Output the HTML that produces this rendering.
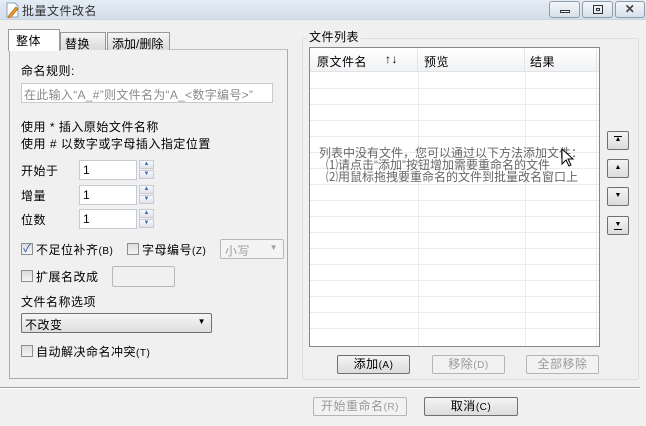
<!DOCTYPE html>
<html><head><meta charset="utf-8"><style>
*{box-sizing:border-box;margin:0;padding:0}
body{width:646px;height:426px;overflow:hidden;background:#f0f0f0;font:12px "Liberation Sans","Noto Sans CJK SC","WenQuanYi Zen Hei",sans-serif;color:#000;position:relative;letter-spacing:0.5px}
.a{position:absolute;white-space:nowrap}
.title{left:0;top:0;width:646px;height:20px;background:linear-gradient(#e4ecf5,#d3deea);border-bottom:1px solid #c9d4df}
.wb{top:1px;height:17px;border:1px solid #8e9cab;border-radius:3px;background:linear-gradient(#f4f7fa,#d7e0ea)}
.inp{background:#fff;border:1px solid #c6cbd1}
.spin{width:15px;height:9px;border:1px solid #c8ccd2;background:linear-gradient(#f6f8fb,#dfe5ec);font-size:6px;color:#3d6bb5;text-align:center;line-height:7px;letter-spacing:0}
.cb{width:12px;height:12px;border:1px solid #8a8f95;background:linear-gradient(#dcdcdc,#f5f5f5)}
.btn{height:19px;border:1px solid #707070;border-radius:2px;background:linear-gradient(#f4f4f4,#dcdcdc);text-align:center;line-height:17px}
.dis{border-color:#b5b5b5;color:#9a9a9a;background:#f2f2f2}
.sb{left:607px;width:22px;height:19px;border:1px solid #707070;border-radius:2px;background:linear-gradient(#f4f4f4,#dcdcdc);font-size:7px;text-align:center;line-height:16px;letter-spacing:0}
.hl{left:310px;width:289px;height:1px;background:#ececec}
.vl{top:72px;width:1px;height:274px;background:#ececec}
.msg{color:#666;left:319px}
</style></head><body>
<div class="a title"></div>
<svg class="a" style="left:4px;top:2px" width="16" height="16"><path d="M3 1h8l3 3v11H3z" fill="#fff" stroke="#8aa0b8"/><path d="M5 13l7-8 2 2-7 8-3 1z" fill="#e8a030" stroke="#a06010" stroke-width=".6"/></svg>
<div class="a" style="left:22px;top:2px;color:#333">批量文件改名</div>
<div class="a wb" style="left:549px;width:31px"><div class="a" style="left:10px;top:8px;width:10px;height:3px;border:1px solid #333;background:#fff"></div></div>
<div class="a wb" style="left:582px;width:31px"><div class="a" style="left:10px;top:3px;width:10px;height:9px;border:1px solid #333"></div><div class="a" style="left:13px;top:6px;width:4px;height:3px;border:1px solid #333"></div></div>
<div class="a wb" style="left:615px;width:30px;text-align:center;font-weight:bold;font-size:12px;line-height:14px;color:#444">✕</div>

<div class="a" style="left:9px;top:49px;width:279px;height:330px;border:1px solid #aaa;border-top-color:#c0c0c0;background:#f0f0f0"></div>
<div class="a" style="left:60px;top:32px;width:46px;height:18px;border:1px solid #999;border-bottom:none;background:linear-gradient(#f5f5f5,#dadada);padding:2px 0 0 4px">替换</div>
<div class="a" style="left:107px;top:32px;width:63px;height:18px;border:1px solid #999;border-bottom:none;background:linear-gradient(#f5f5f5,#dadada);padding:2px 0 0 4px;letter-spacing:0">添加/删除</div>
<div class="a" style="left:8px;top:29px;width:52px;height:22px;border:1px solid #999;border-bottom:none;background:#fff;padding:2px 0 0 7px">整体</div>

<div class="a" style="left:21px;top:62px">命名规则:</div>
<div class="a inp" style="left:21px;top:83px;width:252px;height:20px;color:#8a8a8a;padding:2px 0 0 2px;letter-spacing:0.3px">在此输入“A_#”则文件名为“A_&lt;数字编号&gt;”</div>
<div class="a" style="left:21px;top:118px">使用 * 插入原始文件名称</div>
<div class="a" style="left:21px;top:135px">使用 # 以数字或字母插入指定位置</div>

<div class="a" style="left:21px;top:162px">开始于</div>
<div class="a inp" style="left:79px;top:160px;width:58px;height:20px;padding:2px 0 0 3px">1</div>
<div class="a spin" style="left:139px;top:160px">▲</div><div class="a spin" style="left:139px;top:170px">▼</div>
<div class="a" style="left:21px;top:187px">增量</div>
<div class="a inp" style="left:79px;top:185px;width:58px;height:20px;padding:2px 0 0 3px">1</div>
<div class="a spin" style="left:139px;top:185px">▲</div><div class="a spin" style="left:139px;top:195px">▼</div>
<div class="a" style="left:21px;top:211px">位数</div>
<div class="a inp" style="left:79px;top:209px;width:58px;height:20px;padding:2px 0 0 3px">1</div>
<div class="a spin" style="left:139px;top:209px">▲</div><div class="a spin" style="left:139px;top:219px">▼</div>

<div class="a cb" style="left:21px;top:243px;font-size:11px;line-height:10px;color:#2a4fa0;text-align:center;letter-spacing:0">✓</div>
<div class="a" style="left:36px;top:241px">不足位补齐<span style="font-size:10px">(B)</span></div>
<div class="a cb" style="left:127px;top:243px"></div>
<div class="a" style="left:142px;top:241px">字母编号<span style="font-size:10px">(Z)</span></div>
<div class="a" style="left:220px;top:239px;width:64px;height:20px;border:1px solid #b8b8b8;border-radius:2px;background:#f4f4f4;color:#a0a0a0;padding:2px 0 0 4px">小写<span style="position:absolute;right:5px;top:3px;font-size:8px">▼</span></div>
<div class="a cb" style="left:21px;top:270px"></div>
<div class="a" style="left:36px;top:268px">扩展名改成</div>
<div class="a" style="left:112px;top:266px;width:63px;height:21px;border:1px solid #b8b8b8;border-radius:2px;background:#f0f0f0"></div>
<div class="a" style="left:21px;top:293px">文件名称选项</div>
<div class="a" style="left:21px;top:313px;width:191px;height:20px;border:1px solid #707070;border-radius:2px;background:linear-gradient(#f6f6f6,#dedede);padding:2px 0 0 3px">不改变<span style="position:absolute;right:5px;top:3px;font-size:8px">▼</span></div>
<div class="a cb" style="left:21px;top:345px"></div>
<div class="a" style="left:36px;top:343px">自动解决命名冲突<span style="font-size:10px">(T)</span></div>

<div class="a" style="left:302px;top:38px;width:337px;height:342px;border:1px solid #d5dfe5;border-radius:3px"></div>
<div class="a" style="left:307px;top:28px;background:#f0f0f0;padding:0 2px">文件列表</div>
<div class="a" style="left:309px;top:47px;width:291px;height:300px;border:1px solid #828790;background:#fff"></div>
<div class="a" style="left:310px;top:48px;width:289px;height:24px;background:linear-gradient(#fff,#f1f2f4);border-bottom:1px solid #e2e3e5"></div>
<div class="a" style="left:317px;top:53px">原文件名</div>
<div class="a" style="left:385px;top:52px">↑↓</div>
<div class="a" style="left:424px;top:53px">预览</div>
<div class="a" style="left:530px;top:53px">结果</div>
<div class="a" style="left:417px;top:49px;width:1px;height:23px;background:#e2e3e5"></div>
<div class="a" style="left:524px;top:49px;width:1px;height:23px;background:#e2e3e5"></div>
<div class="a" style="left:596px;top:49px;width:1px;height:23px;background:#e2e3e5"></div>
<div class="a vl" style="left:418px"></div><div class="a vl" style="left:525px"></div><div class="a vl" style="left:596px"></div>
<div class="a hl" style="top:88px"></div><div class="a hl" style="top:104px"></div><div class="a hl" style="top:120px"></div><div class="a hl" style="top:136px"></div><div class="a hl" style="top:152px"></div><div class="a hl" style="top:168px"></div><div class="a hl" style="top:184px"></div><div class="a hl" style="top:200px"></div><div class="a hl" style="top:216px"></div><div class="a hl" style="top:232px"></div><div class="a hl" style="top:248px"></div><div class="a hl" style="top:264px"></div><div class="a hl" style="top:280px"></div><div class="a hl" style="top:296px"></div><div class="a hl" style="top:312px"></div><div class="a hl" style="top:328px"></div>
<div class="a msg" style="top:144px;letter-spacing:0">列表中没有文件，您可以通过以下方法添加文件：</div>
<div class="a msg" style="top:156px;left:326px;letter-spacing:0">⑴请点击“添加”按钮增加需要重命名的文件</div>
<div class="a msg" style="top:168px;left:326px;letter-spacing:0">⑵用鼠标拖拽要重命名的文件到批量改名窗口上</div>
<svg class="a" style="left:561px;top:148px" width="14" height="20"><path d="M1 1v15l4-4 3 6 2-1-3-6h5z" fill="#fff" stroke="#000"/></svg>

<div class="a sb" style="top:131px">▲<div style="position:absolute;left:6px;top:4px;width:8px;height:1px;background:#000"></div></div>
<div class="a sb" style="top:159px">▲</div>
<div class="a sb" style="top:187px">▼</div>
<div class="a sb" style="top:216px">▼<div style="position:absolute;left:6px;top:12px;width:8px;height:1px;background:#000"></div></div>

<div class="a btn" style="left:337px;top:355px;width:73px">添加<span style="font-size:10px">(A)</span></div>
<div class="a btn dis" style="left:432px;top:355px;width:73px">移除<span style="font-size:10px">(D)</span></div>
<div class="a btn dis" style="left:526px;top:355px;width:73px">全部移除</div>

<div class="a" style="left:0;top:387px;width:640px;height:1px;background:#a0a0a0"></div>
<div class="a" style="left:0;top:388px;width:640px;height:1px;background:#fff"></div>
<div class="a btn dis" style="left:313px;top:397px;width:94px">开始重命名<span style="font-size:10px">(R)</span></div>
<div class="a btn" style="left:424px;top:397px;width:94px">取消<span style="font-size:10px">(C)</span></div>
</body></html>
